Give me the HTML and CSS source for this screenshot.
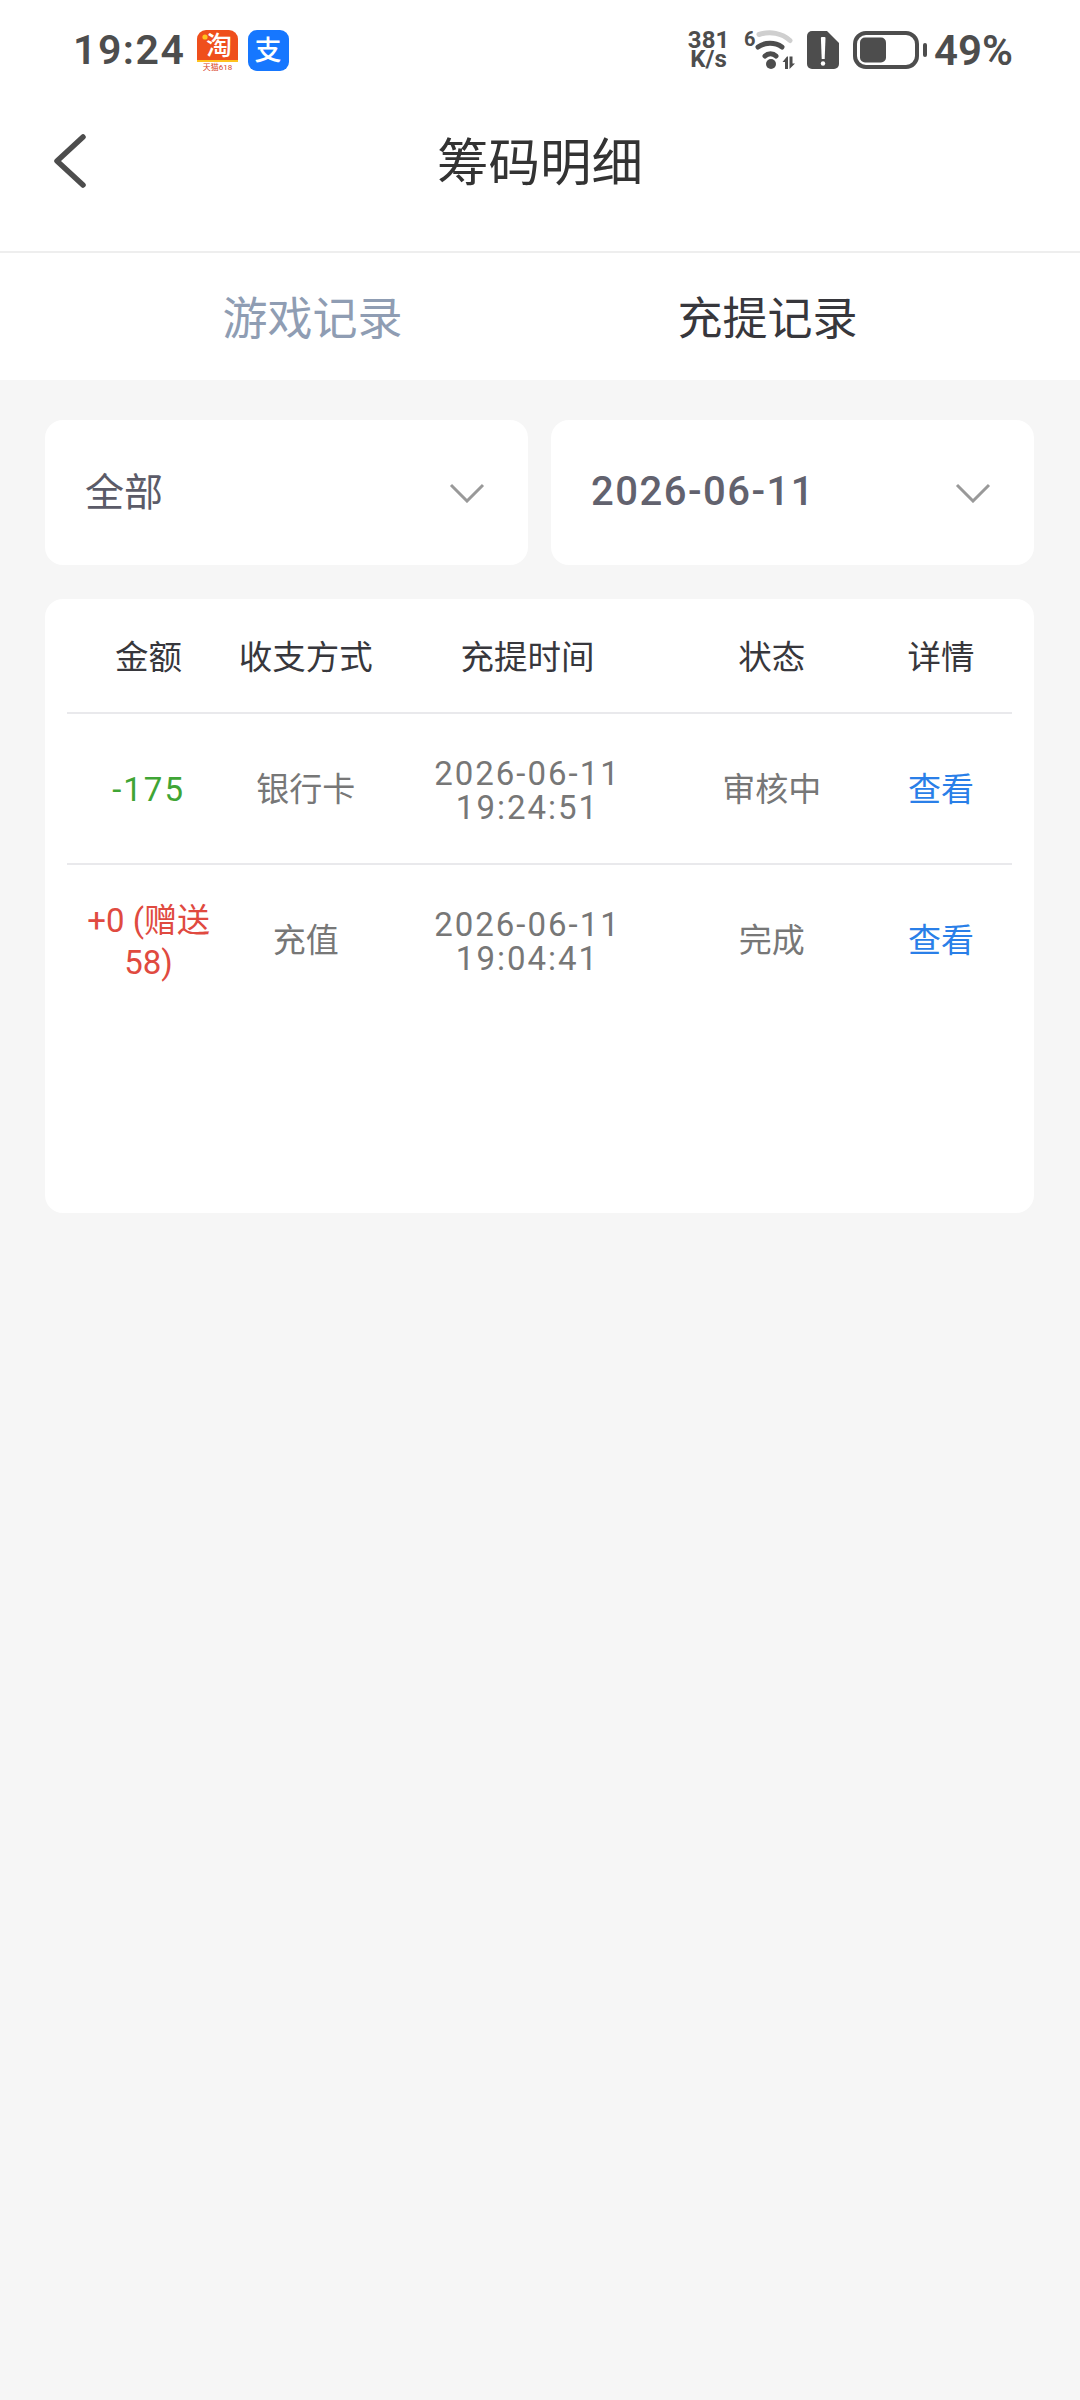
FILE: index.html
```html
<!DOCTYPE html>
<html lang="zh-CN">
<head>
    <meta charset="UTF-8">
    <meta name="viewport" content="width=device-width, initial-scale=1.0">
    <title>筹码明细</title>
    <link rel="stylesheet" href="styles.css">
</head>
<body>
<div class="status-bar">
  <div class="status-left">
    <span class="time">19:24</span>
    <svg class="app-icon" viewBox="0 0 41 41">
      <defs><clipPath id="tb"><rect width="41" height="41" rx="9"/></clipPath></defs>
      <g clip-path="url(#tb)">
        <rect width="41" height="41" fill="#fff"/>
        <rect width="41" height="30" fill="#ef4f1c"/>
        <rect y="30" width="41" height="2" fill="#ffc21f"/>
      </g>
      <circle cx="8" cy="7" r="2.600" fill="#ffc21f"/>
      <text x="22" y="25" class="tb-char">淘</text>
      <text x="20.500" y="40" class="tb-small">天猫618</text>
    </svg>
    <svg class="app-icon" viewBox="0 0 41 41">
      <rect width="41" height="41" rx="9" fill="#1677ff"/>
      <text x="20" y="30" class="ali-char">支</text>
    </svg>
  </div>
  <div class="status-right">
    <div class="speed"><span>381</span><span>K/s</span></div>
    <svg class="wifi" viewBox="0 0 52 38">
      <text x="0" y="15" class="wifi-six">6</text>
      <path d="M15 3.500C26 0 38 2 46 9.500" fill="none" stroke="#cfcfcf" stroke-width="5" stroke-linecap="round"/>
      <path d="M14 16c7-5 17-5 24 0" fill="none" stroke="#4d4d4d" stroke-width="5" stroke-linecap="round"/>
      <path d="M21 25c3-3 8-3 11 0" fill="none" stroke="#4d4d4d" stroke-width="5" stroke-linecap="round"/>
      <circle cx="27" cy="33" r="5" fill="#4d4d4d"/>
      <path d="M43 25.500L38.500 31H41V38H44V25.500zM45.500 25.500H48.500V32.500H51L45.500 38z" fill="#4d4d4d"/>
    </svg>
    <svg class="sim" viewBox="0 0 32 38">
      <path d="M5 0h15l12 12v21a5 5 0 0 1-5 5H5a5 5 0 0 1-5-5V5a5 5 0 0 1 5-5z" fill="#4d4d4d"/>
      <path d="M15 6h2.500a1 1 0 0 1 1 1l-.8 21h-3l-.8-21a1 1 0 0 1 1-1z" fill="#fff"/>
      <circle cx="16" cy="32.500" r="2.200" fill="#fff"/>
    </svg>
    <svg class="battery" viewBox="0 0 74 38">
      <rect x="2" y="2" width="62" height="34" rx="11" fill="none" stroke="#4d4d4d" stroke-width="4"/>
      <rect x="7" y="6.500" width="26" height="25" rx="5" fill="#4d4d4d"/>
      <rect x="70" y="12" width="4" height="14" rx="2" fill="#4d4d4d"/>
    </svg>
    <span class="percent">49%</span>
  </div>
</div>

<div class="nav">
  <svg class="back" viewBox="0 0 32 54">
    <path d="M29 3L3 27l26 24" fill="none" stroke="#4d4d4d" stroke-width="5.500" stroke-linecap="round" stroke-linejoin="round"/>
  </svg>
  <h1>筹码明细</h1>
</div>

<div class="tabs">
  <div class="tab">游戏记录</div>
  <div class="tab active">充提记录</div>
</div>

<div class="content">
  <div class="filters">
    <div class="filter">
      <span class="all">全部</span>
      <svg class="chevron" viewBox="0 0 36 20"><path d="M2 2l16 16L34 2" fill="none" stroke="#999" stroke-width="3"/></svg>
    </div>
    <div class="filter">
      <span class="date">2026-06-11</span>
      <svg class="chevron" viewBox="0 0 36 20"><path d="M2 2l16 16L34 2" fill="none" stroke="#999" stroke-width="3"/></svg>
    </div>
  </div>

  <div class="card">
    <table class="records">
      <tr>
        <th class="col-amount">金额</th>
        <th class="col-method">收支方式</th>
        <th class="col-time">充提时间</th>
        <th class="col-status">状态</th>
        <th class="col-detail">详情</th>
      </tr>
      <tr>
        <td class="minus">-175</td>
        <td>银行卡</td>
        <td class="time-cell">2026-06-11<br>19:24:51</td>
        <td>审核中</td>
        <td class="link">查看</td>
      </tr>
      <tr>
        <td class="plus">+0 (赠送<br>58)</td>
        <td>充值</td>
        <td class="time-cell">2026-06-11<br>19:04:41</td>
        <td>完成</td>
        <td class="link">查看</td>
      </tr>
    </table>
  </div>
</div>
</body>
</html>
```
FILE: styles.css
```css
html {
  background-color: #f6f6f6;
}
body {
  font-family: Roboto, "Noto Sans CJK SC", sans-serif;
  margin: 0;
  padding: 0;
  min-height: 2400px;
  background-color: #f6f6f6;
  color: #333;
}

/* status bar */
.status-bar {
  height: 100px;
  padding: 0 67px 0 73px;
  background-color: #fff;
  display: flex;
  align-items: center;
  justify-content: space-between;
  color: #4d4d4d;
}
.status-left {
  display: flex;
  align-items: center;
}
.time {
  font-size: 41px;
  font-weight: 600;
  letter-spacing: 1.5px;
  width: 124px;
}
.app-icon {
  width: 41px;
  height: 41px;
  margin-right: 10px;
}
.tb-char {
  font-size: 26px;
  font-weight: 500;
  fill: #fff;
  text-anchor: middle;
}
.tb-small {
  font-size: 8px;
  fill: #d8452a;
  text-anchor: middle;
}
.ali-char {
  font-size: 27px;
  font-weight: 500;
  fill: #fff;
  text-anchor: middle;
}
.status-right {
  display: flex;
  align-items: center;
}
.speed {
  width: 41px;
  margin-right: 15px;
  display: flex;
  flex-direction: column;
  align-items: center;
  font-size: 24px;
  line-height: 19px;
  font-weight: 700;
}
.wifi {
  width: 52px;
  height: 38px;
  margin-right: 11px;
  overflow: visible;
}
.wifi-six {
  font-size: 20px;
  font-weight: 700;
  fill: #4d4d4d;
}
.sim {
  width: 32px;
  height: 38px;
  margin-right: 14px;
}
.battery {
  width: 74px;
  height: 38px;
  margin-right: 7px;
}
.percent {
  font-size: 42px;
  font-weight: 600;
}

/* nav */
.nav {
  position: relative;
  height: 151px;
  background-color: #fff;
  border-bottom: 2px solid #eee;
}
.back {
  position: absolute;
  left: 54px;
  top: 34px;
  width: 32px;
  height: 54px;
}
h1 {
  margin: 0;
  padding-top: 32px;
  font-size: 51.5px;
  line-height: 64px;
  font-weight: 400;
  text-align: center;
  color: #333;
}

/* tabs */
.tabs {
  height: 127px;
  box-sizing: border-box;
  padding: 0 85px 2px;
  background-color: #fff;
  display: flex;
  align-items: center;
}
.tab {
  flex: 1;
  text-align: center;
  font-size: 45px;
  color: #8f9db3;
}
.tab.active {
  color: #37373c;
}

/* filters */
.content {
  padding: 40px 46px 40px 45px;
}
.filters {
  display: flex;
  gap: 23px;
}
.filter {
  flex: 1;
  height: 145px;
  padding: 0 43px 0 40px;
  background-color: #fff;
  border-radius: 18px;
  display: flex;
  align-items: center;
  justify-content: space-between;
  font-size: 39px;
  color: #5b5b68;
}
.all {
  padding-bottom: 8px;
}
.date {
  padding-bottom: 2px;
  font-size: 40px;
  font-weight: 500;
  letter-spacing: 1.5px;
  color: #62626e;
}
.chevron {
  width: 36px;
  height: 20px;
}

/* table */
.card {
  margin-top: 34px;
  height: 614px;
  padding: 0 22px;
  background-color: #fff;
  border-radius: 18px;
}
.records {
  width: 100%;
  table-layout: fixed;
  border-collapse: collapse;
}
.records th {
  box-sizing: border-box;
  height: 114px;
  padding: 0 0 2px;
  font-size: 33.5px;
  font-weight: 400;
  color: #37373c;
  border-bottom: 2px solid #e9e9ec;
}
.records td {
  box-sizing: border-box;
  height: 151px;
  padding: 2px 0 0;
  font-size: 33px;
  line-height: 40px;
  text-align: center;
  color: #777;
}
.records tr:nth-child(2) td {
  border-bottom: 2px solid #e9e9ec;
}
.col-amount { width: 163px; }
.col-method { width: 151px; }
.col-time { width: 292px; }
.col-status { width: 196px; }
.col-detail { width: 142px; }
.records .minus {
  color: #3fa535;
  letter-spacing: 2px;
}
.records .plus {
  padding-top: 4px;
  color: #e04a40;
  line-height: 42px;
}
.records .link {
  color: #2a7fe8;
}
.records .time-cell {
  padding-top: 4px;
  line-height: 34px;
  letter-spacing: 2px;
}
```
